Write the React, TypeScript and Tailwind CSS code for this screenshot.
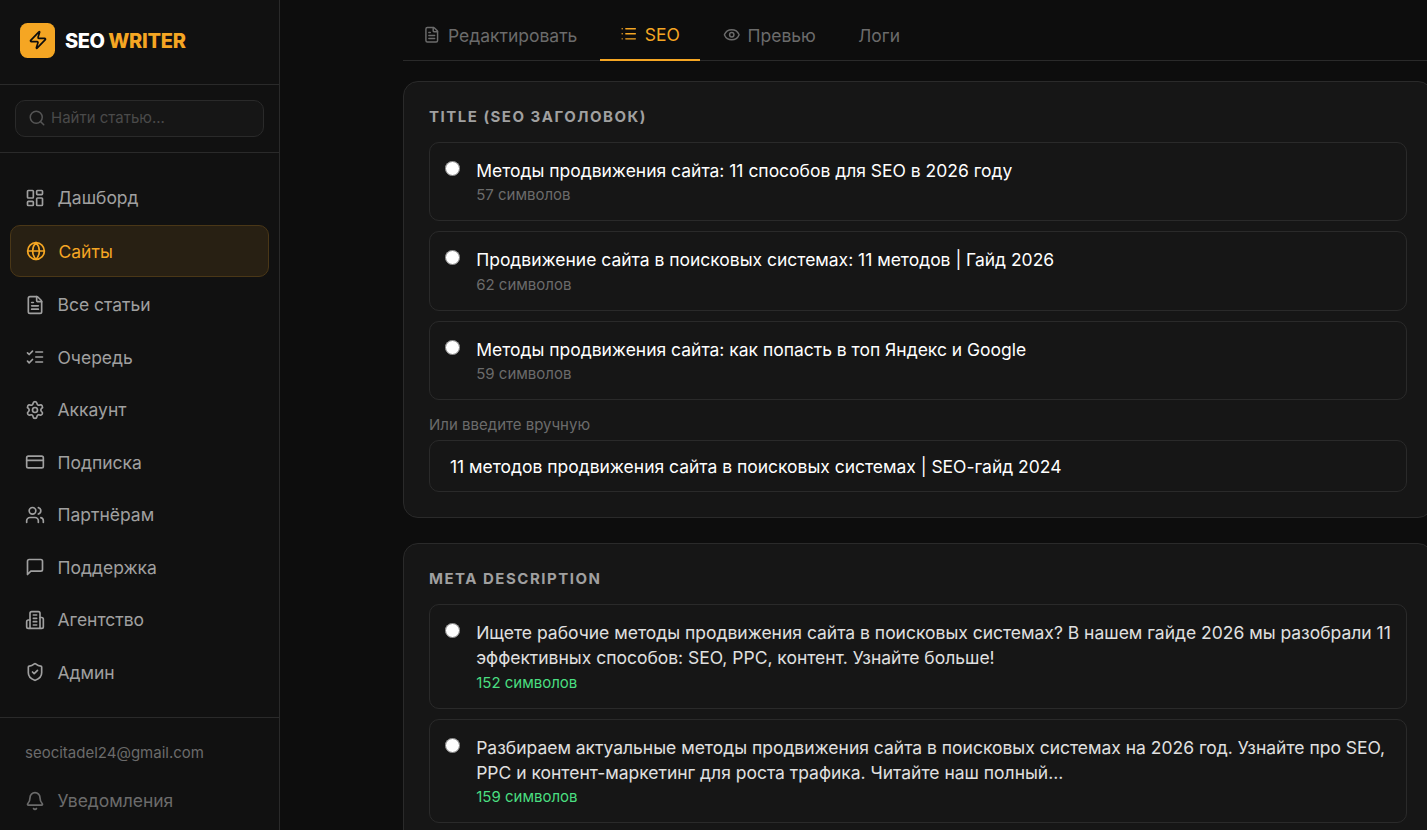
import React from 'react';
import {
  Bell,
  CreditCard,
  Eye,
  FileText,
  Globe,
  LayoutDashboard,
  List,
  Search,
  Settings,
  ShieldCheck,
  Users,
  Zap,
} from 'lucide-react';

interface IconProps {
  className?: string;
  strokeWidth?: number;
}

interface NavItem {
  label: string;
  icon: React.ComponentType<IconProps>;
  active?: boolean;
}

interface Tab {
  label: string;
  icon?: React.ComponentType<IconProps>;
  active?: boolean;
}

interface Option {
  text: string;
  length: number;
}

// Builds an outline icon from a list of 24x24 paths
const outline = (paths: string[]): React.FC<IconProps> => ({ className, strokeWidth = 2 }) => (
  <svg
    viewBox="0 0 24 24"
    fill="none"
    stroke="currentColor"
    strokeWidth={strokeWidth}
    strokeLinecap="round"
    strokeLinejoin="round"
    className={className}
  >
    {paths.map((d) => (
      <path key={d} d={d} />
    ))}
  </svg>
);

const Checks = outline(['m3 17 2 2 4-4', 'm3 7 2 2 4-4', 'M13 6h8', 'M13 12h8', 'M13 18h8']);
const Message = outline(['M21 15a2 2 0 0 1-2 2H7l-4 4V5a2 2 0 0 1 2-2h14a2 2 0 0 1 2 2z']);
const Building = outline([
  'M6 22V4a2 2 0 0 1 2-2h8a2 2 0 0 1 2 2v18Z',
  'M6 12H4a2 2 0 0 0-2 2v6a2 2 0 0 0 2 2h2',
  'M18 9h2a2 2 0 0 1 2 2v9a2 2 0 0 1-2 2h-2',
  'M10 6h4',
  'M10 10h4',
  'M10 14h4',
  'M10 18h4',
]);

const navItems: NavItem[] = [
  { label: 'Дашборд', icon: LayoutDashboard },
  { label: 'Сайты', icon: Globe, active: true },
  { label: 'Все статьи', icon: FileText },
  { label: 'Очередь', icon: Checks },
  { label: 'Аккаунт', icon: Settings },
  { label: 'Подписка', icon: CreditCard },
  { label: 'Партнёрам', icon: Users },
  { label: 'Поддержка', icon: Message },
  { label: 'Агентство', icon: Building },
  { label: 'Админ', icon: ShieldCheck },
];

const tabs: Tab[] = [
  { label: 'Редактировать', icon: FileText },
  { label: 'SEO', icon: List, active: true },
  { label: 'Превью', icon: Eye },
  { label: 'Логи' },
];

const titles: Option[] = [
  { text: 'Методы продвижения сайта: 11 способов для SEO в 2026 году', length: 57 },
  { text: 'Продвижение сайта в поисковых системах: 11 методов | Гайд 2026', length: 62 },
  { text: 'Методы продвижения сайта: как попасть в топ Яндекс и Google', length: 59 },
];

const descriptions: Option[] = [
  {
    text: 'Ищете рабочие методы продвижения сайта в поисковых системах? В нашем гайде 2026 мы разобрали 11 эффективных способов: SEO, PPC, контент. Узнайте больше!',
    length: 152,
  },
  {
    text: 'Разбираем актуальные методы продвижения сайта в поисковых системах на 2026 год. Узнайте про SEO, PPC и контент-маркетинг для роста трафика. Читайте наш полный...',
    length: 159,
  },
];

const Sidebar: React.FC = () => (
  <aside className="flex h-full w-[280px] shrink-0 flex-col border-r border-[#2a2a2a] bg-[#111111]">
    <div className="flex h-[85px] shrink-0 items-center gap-2.5 border-b border-[#2a2a2a] px-5 pb-1">
      <div className="flex size-[35px] items-center justify-center rounded-[7.5px] bg-[#f5a623]">
        <Zap className="size-5 text-[#0d0d0d]" />
      </div>
      <div className="pt-0.5 text-[20px] leading-[30px] font-extrabold tracking-[-0.4px] text-white">
        SEO <span className="-ml-[0.5px] tracking-[-0.25px] text-[#f5a623]">WRITER</span>
      </div>
    </div>

    <div className="h-[68px] shrink-0 border-b border-[#2a2a2a] px-[15px] pt-[15px]">
      <div className="flex h-[37px] w-[249px] items-center gap-[5px] rounded-[10px] border border-[#2a2a2a] bg-[#161616] px-3">
        <Search className="mb-px size-[18px] shrink-0 text-[#555555]" />
        <input
          className="w-full bg-transparent text-[15px] outline-none placeholder:text-[#4a4a4a]"
          placeholder="Найти статью..."
        />
      </div>
    </div>

    <nav className="flex flex-1 flex-col gap-[2.5px] px-2.5 pt-[19.5px]">
      {navItems.map(({ label, icon: Icon, active }) => (
        <a
          key={label}
          className={
            active
              ? 'flex h-[52px] shrink-0 items-center gap-[12.5px] rounded-[10px] border border-[#4a3717] bg-[#282013] px-[15px] text-[17.5px] text-[#f5a623]'
              : 'flex h-[50px] shrink-0 items-center gap-[12.5px] px-[15px] text-[17.5px] tracking-[-0.01px] text-[#a0a0a0]'
          }
        >
          <Icon className="size-5 shrink-0" />
          <span className="pt-[1.5px]">{label}</span>
        </a>
      ))}
    </nav>

    <div className="h-[113px] shrink-0 border-t border-[#2a2a2a] px-[25px] pt-6 text-[#6b6b6b]">
      <div className="text-[15px] leading-[22.5px]">seocitadel24@gmail.com</div>
      <div className="mt-[23px] flex items-center gap-[12.5px] text-[17.5px] leading-[26px] tracking-[-0.02px]">
        <Bell className="size-5" />
        Уведомления
      </div>
    </div>
  </aside>
);

const OptionRow: React.FC<{ option: Option; name: string; good?: boolean }> = ({ option, name, good }) => (
  <label className="flex items-start gap-[16.2px] rounded-[10px] border border-[#2a2a2a] py-[15px] pr-3 pl-[15px]">
    <input type="radio" name={name} className="mt-[3px] size-[15px] shrink-0" />
    <div>
      <div
        className={
          good
            ? 'text-[17.5px] leading-[25px] tracking-[-0.01px] text-[#e0e0e0]'
            : 'text-[17.5px] leading-[25px] tracking-[-0.015px] text-white'
        }
      >
        {option.text}
      </div>
      <div
        className={
          good
            ? 'mt-[2.5px] text-[15px] leading-5 text-[#4ade80]'
            : 'mt-[2.3px] text-[15px] leading-5 text-[#6b6b6b]'
        }
      >
        {option.length} символов
      </div>
    </div>
  </label>
);

const Card: React.FC<{ title: string; children: React.ReactNode }> = ({ title, children }) => (
  <section className="rounded-[15px] border border-[#2a2a2a] bg-[#161616] p-[25px]">
    <h3 className="mb-[15px] text-[15px] leading-5 font-bold tracking-[1.5px] text-[#a0a0a0] uppercase">{title}</h3>
    {children}
  </section>
);

export default function App() {
  return (
    <div className="flex h-[830px] w-[1427px] overflow-hidden bg-[#0d0d0d] font-['Inter',sans-serif] text-white">
      <Sidebar />
      <main className="min-w-0 flex-1 overflow-hidden pl-[123px]">
        <div className="w-[1030px]">
          <div className="mb-5 flex h-[61px] items-end gap-[2.5px] border-b border-[#2a2a2a]">
            {tabs.map(({ label, icon: Icon, active }) => (
              <button
                key={label}
                className={
                  active
                    ? '-mb-px flex h-[52px] items-center gap-[7.5px] border-b-2 border-[#f5a623] px-5 text-[17.5px] text-[#f5a623]'
                    : 'flex h-[50px] items-center gap-[7.5px] px-5 text-[17.5px] tracking-[-0.01px] text-[#6b6b6b]'
                }
              >
                {Icon && <Icon className="size-[17.5px]" />}
                <span className="pt-[1.5px]">{label}</span>
              </button>
            ))}
          </div>

          <div className="flex flex-col gap-[25px]">
            <Card title="Title (SEO заголовок)">
              <div className="flex flex-col gap-2.5">
                {titles.map((option) => (
                  <OptionRow key={option.length} option={option} name="title" />
                ))}
              </div>
              <div className="mt-[15px] mb-[5px] text-[15px] leading-5 text-[#6b6b6b]">Или введите вручную</div>
              <input
                className="h-[52.3px] w-full rounded-[10px] border border-[#2a2a2a] bg-[#161616] px-5 pt-px text-[17.5px] tracking-[-0.02px] text-white outline-none"
                defaultValue="11 методов продвижения сайта в поисковых системах | SEO-гайд 2024"
              />
            </Card>

            <Card title="Meta Description">
              <div className="flex flex-col gap-2.5">
                {descriptions.map((option) => (
                  <OptionRow key={option.length} option={option} name="description" good />
                ))}
              </div>
            </Card>
          </div>
        </div>
      </main>
    </div>
  );
}
